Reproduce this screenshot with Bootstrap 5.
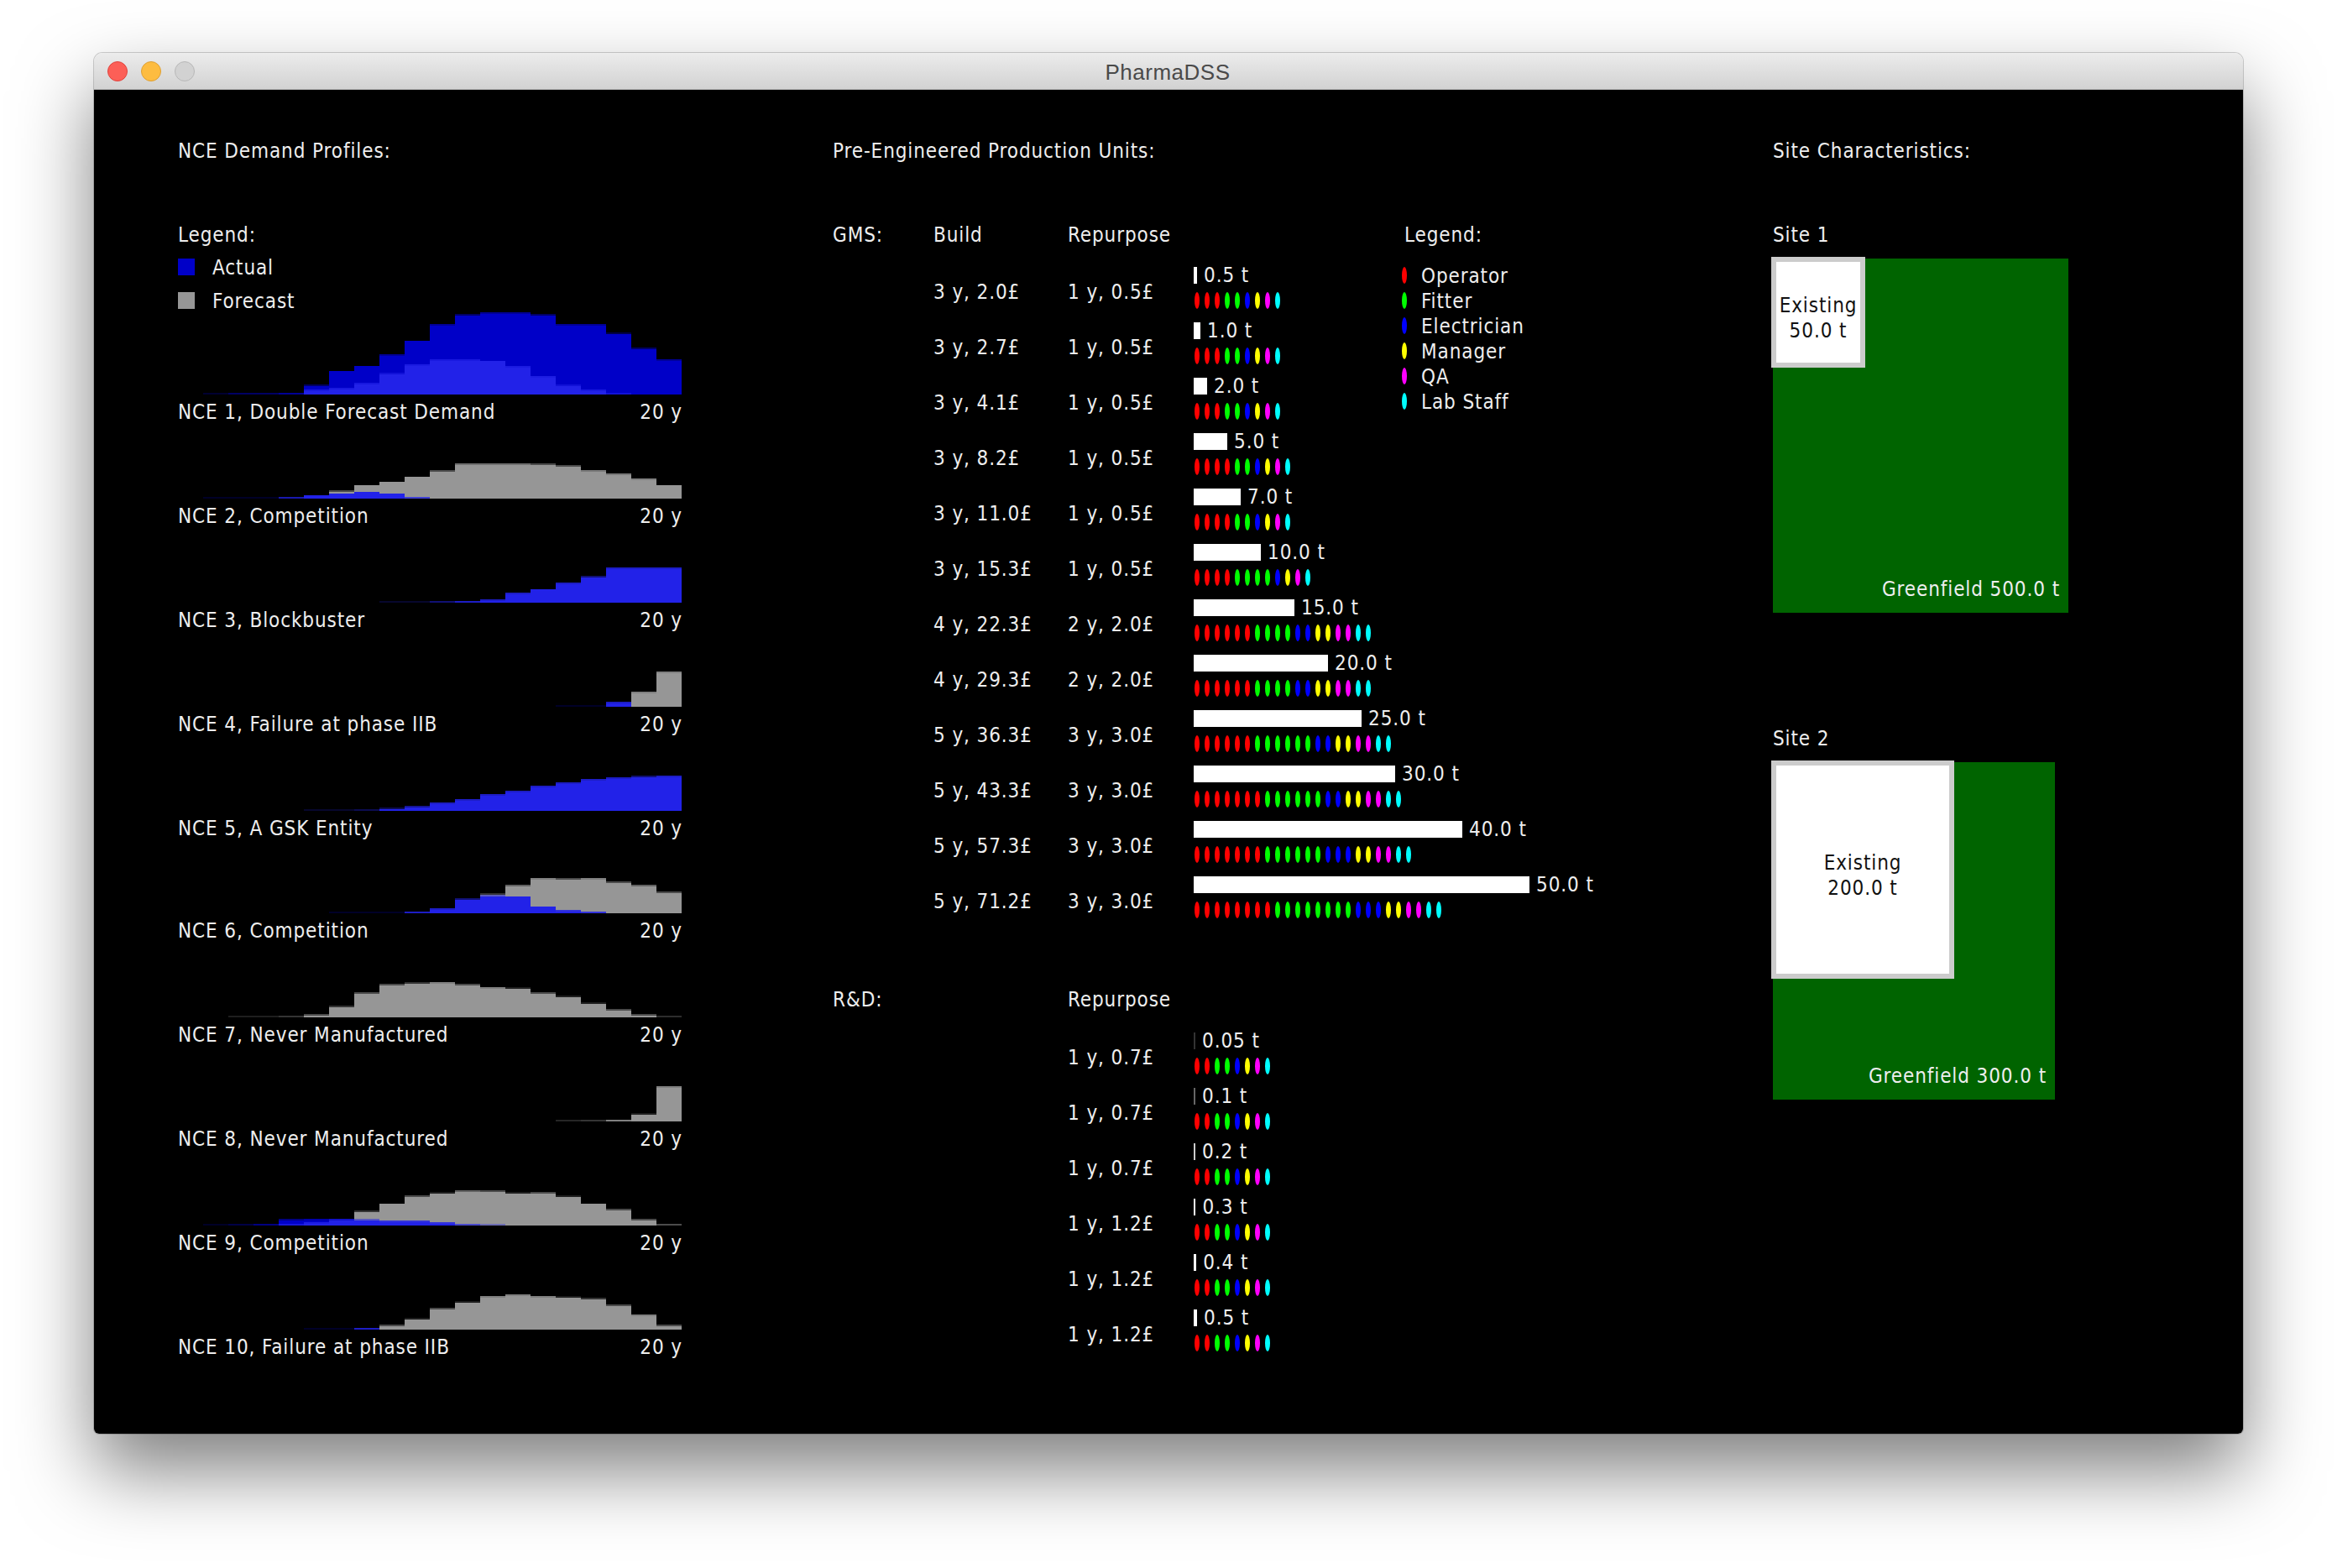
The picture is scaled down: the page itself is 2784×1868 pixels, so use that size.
<!doctype html>
<html lang="en">
<head>
<meta charset="utf-8">
<title>PharmaDSS</title>
<link rel="stylesheet" href="https://cdn.jsdelivr.net/npm/bootstrap@5.3.0/dist/css/bootstrap.min.css">
<style>
html,body{height:1868px;overflow:hidden;background:#fff}
body{padding-top:63px}
.dss-window{margin:0 112px;height:1645px;border-radius:10px 10px 6px 6px;box-shadow:0 44px 90px rgba(0,0,0,.5),0 0 0 1px rgba(0,0,0,.18)}
.dss-bar{height:44px;border-radius:10px 10px 0 0;background:linear-gradient(#ececec,#d2d2d2);border-bottom:1px solid #b4b4b4;padding-left:16px;gap:16px}
.dss-light{width:24px;height:24px;border-radius:50%;border:1px solid}
.dss-red{background:#fc5f57;border-color:#e0443e}
.dss-amber{background:#fdbc40;border-color:#dea034}
.dss-grey{background:#d2d2d2;border-color:#b8b8b8}
.dss-title{left:0;right:2px;top:0;font:26px/46px "Liberation Sans",sans-serif;letter-spacing:.5px;color:#4a4a4a;text-align:center}
.dss-body{height:1601px;background:#000;color:#eee;padding:58px 0 0 100px;border-radius:0 0 6px 6px;font-family:"DejaVu Sans Condensed","DejaVu Sans",sans-serif;font-size:24px;line-height:30px;font-stretch:condensed;letter-spacing:.9px}
.dss-left{width:600px;margin-right:180px}
.dss-mid{width:1120px}
.dss-head{margin-bottom:70px}
.dss-key{margin-top:13px;margin-bottom:2px;gap:20px}
.dss-keyrow{height:20px;line-height:22px;gap:21px}
.dss-sq{width:20px;height:20px}
.dss-actual{background:#0000c8}
.dss-fore{background:#969696}
.dss-chart{display:block;width:600px}
.dss-item{margin-bottom:44px}
.dss-label{margin-top:6px}
.dss-label span:last-child{margin-right:-1px}
.dss-units{width:681px}
.dss-c1{width:120px;flex:none}
.dss-c2{width:160px;flex:none}
.dss-c3{width:150px;flex:none}
.dss-gap{margin-bottom:23px}
.dss-row{height:66px;white-space:nowrap}
.dss-val{padding-top:15px}
.dss-barline{height:20px;line-height:20px;gap:8px}
.dss-fill{height:20px;background:#fff;flex:none}
.dss-dots{margin-top:10px;gap:6px;padding-left:1px}
.dss-dot{width:6px;height:20px;border-radius:50%;flex:none}
.dss-rd{margin-top:66px;margin-bottom:24px}
.dss-lg{margin-top:23px;gap:10px;margin-left:-3px}
.dss-lgrow{height:20px;line-height:22px;gap:17px}
.dss-field{background:#006400;padding:0 10px 13px 0}
.dss-f1{width:352px;height:422px;margin-top:13px}
.dss-f2{width:336px;height:402px;margin-top:13px}
.dss-exist{top:-2px;left:-2px;background:#fff;color:#111;border:6px solid #ccc;padding-top:14px}
.dss-e1{width:112px;height:132px}
.dss-e2{width:218px;height:260px}
.dss-site2{margin-top:135px}
</style>
</head>
<body>
<div class="dss-window">
  <div class="dss-bar d-flex align-items-center position-relative">
    <span class="dss-light dss-red"></span><span class="dss-light dss-amber"></span><span class="dss-light dss-grey"></span>
    <div class="dss-title position-absolute">PharmaDSS</div>
  </div>
  <div class="dss-body d-flex">
    <div class="dss-left">
      <div class="dss-head">NCE Demand Profiles:</div>
      <div>Legend:</div>
      <div class="dss-key d-flex flex-column">
        <div class="dss-keyrow d-flex"><span class="dss-sq dss-actual"></span>Actual</div>
        <div class="dss-keyrow d-flex"><span class="dss-sq dss-fore"></span>Forecast</div>
      </div>
      <div id="charts"></div>
    </div>
    <div class="dss-mid">
      <div class="dss-head">Pre-Engineered Production Units:</div>
      <div class="d-flex">
        <div class="dss-units">
          <div class="d-flex dss-gap"><div class="dss-c1">GMS:</div><div class="dss-c2">Build</div><div class="dss-c3">Repurpose</div></div>
          <div id="gms"></div>
          <div class="d-flex dss-rd"><div class="dss-c1">R&amp;D:</div><div class="dss-c2"></div><div class="dss-c3">Repurpose</div></div>
          <div id="rnd"></div>
        </div>
        <div>
          <div>Legend:</div>
          <div class="dss-lg d-flex flex-column" id="staff"></div>
        </div>
      </div>
    </div>
    <div>
      <div class="dss-head">Site Characteristics:</div>
      <div>Site 1</div>
      <div class="dss-field dss-f1 position-relative d-flex justify-content-end align-items-end">
        <div class="dss-exist dss-e1 position-absolute d-flex flex-column justify-content-center align-items-center"><div>Existing</div><div>50.0 t</div></div>
        <div>Greenfield 500.0 t</div>
      </div>
      <div class="dss-site2">Site 2</div>
      <div class="dss-field dss-f2 position-relative d-flex justify-content-end align-items-end">
        <div class="dss-exist dss-e2 position-absolute d-flex flex-column justify-content-center align-items-center"><div>Existing</div><div>200.0 t</div></div>
        <div>Greenfield 300.0 t</div>
      </div>
    </div>
  </div>
</div>
<script src="https://cdn.jsdelivr.net/npm/bootstrap@5.3.0/dist/js/bootstrap.bundle.min.js"></script>
<script>
const Z=n=>Array(n).fill(0);
const same=a=>[a,a];
const charts=[
 ["NCE 1, Double Forecast Demand",100,[0,.5,1,1,1.5,11,28,34,47.5,64,83.5,95,97.5,97.5,95,83.5,83.5,72.7,55,41.5],[0,0,0,0,0,5.5,7.5,13.4,25,35.6,41.5,41.5,40,33.6,21.7,11,5.5,1,0,0]],
 ["NCE 2, Competition",44,[0,.2,.2,.3,1.5,4,6,8,6,1.5,...Z(10)],[0,0,0,0,1.5,4,9,16,20,26,33,41.5,41.5,41.5,41,39,33.6,29.6,23.7,16]],
 ["NCE 3, Blockbuster",44,...same([...Z(8),.2,.3,1,1.7,3.7,11.7,16,23.7,31,41.7,41.7,41.7])],
 ["NCE 4, Failure at phase IIB",44,[...Z(15),.2,.3,5.7,0,0],[...Z(17),5.7,17.7,41.7]],
 ["NCE 5, A GSK Entity",44,...same([...Z(5),.2,.2,.7,2.7,5.3,9.7,13.7,19.7,23.7,29.7,33.7,37.7,39.7,41,41.7])],
 ["NCE 6, Competition",42,[...Z(6),.2,.2,.3,1.7,5.7,17,21,20,8,3.7,1.7,0,0,0],[...Z(9),1.7,5.7,17,22.7,33.3,41.7,41,41.7,37,33.3,25]],
 ["NCE 7, Never Manufactured",44,Z(20),[0,0,.2,.2,.7,3,12.7,29,39,40.7,41.7,39,35.7,34.3,29,24.3,16.3,9,3,.6]],
 ["NCE 8, Never Manufactured",44,Z(20),[...Z(15),.5,.7,1.7,8.3,41.7]],
 ["NCE 9, Competition",44,[0,.3,.7,1.3,7.3,7.7,7.7,7,5.7,5.7,3.7,1.3,.7,...Z(7)],[0,0,0,0,1.3,3.7,7,16.7,26,35,38.3,41.3,41,38.3,39,34.3,26,19,7,1]],
 ["NCE 10, Failure at phase IIB",44,[...Z(5),.2,.2,1.7,...Z(12)],[...Z(7),1.7,5,12.3,25,32.3,39.7,41.7,39.7,38.3,36.7,29,17.7,5]]
];
function seg(i,h,H,col){
  if(h<=0)return "";
  const s=Math.floor(h/2)*2,fr=(h-s)/2,x=i*30;let o="";
  if(s>0)o+=`<rect x="${x}" y="${H-s}" width="30" height="${s}" fill="${col}"/>`;
  if(fr>0)o+=`<rect x="${x}" y="${H-s-2}" width="30" height="2" fill="${col}" opacity="${Math.max(fr,.2).toFixed(2)}"/>`;
  return o;
}
document.getElementById("charts").innerHTML=charts.map(([n,H,a,f])=>{
  let r="";
  for(let i=0;i<20;i++){
    const hi=Math.max(a[i],f[i]),lo=Math.min(a[i],f[i]);
    if(hi>lo)r+=seg(i,hi,H,a[i]>f[i]?"#0000c8":"#969696");
    r+=seg(i,lo,H,"#2222e8");
  }
  return `<div class="dss-item"><svg class="dss-chart" height="${H}" viewBox="0 0 600 ${H}" shape-rendering="crispEdges">${r}</svg><div class="dss-label d-flex justify-content-between"><span>${n}</span><span>20 y</span></div></div>`;
}).join("");
const cols=["#f00","#0f0","#00f","#ff0","#f0f","#0ff"];
function dots(c){let o="";c.forEach((n,k)=>{for(let j=0;j<n;j++)o+=`<span class="dss-dot" style="background:${cols[k]}"></span>`});return o}
function unit(b,r,t,c){
  const w=t*8,fill=w<2?`width:2px;opacity:${(w/2).toFixed(2)}`:`width:${w}px`;
  return `<div class="dss-row d-flex"><div class="dss-c1"></div><div class="dss-c2 dss-val">${b}</div><div class="dss-c3 dss-val">${r}</div><div><div class="dss-barline d-flex"><span class="dss-fill" style="${fill}"></span><span>${t==.05?"0.05":t.toFixed(1)} t</span></div><div class="dss-dots d-flex">${dots(c)}</div></div></div>`;
}
document.getElementById("gms").innerHTML=[
 ["3 y, 2.0£","1 y, 0.5£",.5,[3,2,1,1,1,1]],["3 y, 2.7£","1 y, 0.5£",1,[3,2,1,1,1,1]],["3 y, 4.1£","1 y, 0.5£",2,[3,2,1,1,1,1]],
 ["3 y, 8.2£","1 y, 0.5£",5,[4,2,1,1,1,1]],["3 y, 11.0£","1 y, 0.5£",7,[4,2,1,1,1,1]],["3 y, 15.3£","1 y, 0.5£",10,[4,4,1,1,1,1]],
 ["4 y, 22.3£","2 y, 2.0£",15,[6,4,2,2,2,2]],["4 y, 29.3£","2 y, 2.0£",20,[6,4,2,2,2,2]],["5 y, 36.3£","3 y, 3.0£",25,[6,6,2,2,2,2]],
 ["5 y, 43.3£","3 y, 3.0£",30,[7,6,2,2,2,2]],["5 y, 57.3£","3 y, 3.0£",40,[7,6,3,2,2,2]],["5 y, 71.2£","3 y, 3.0£",50,[8,8,3,2,2,2]]
].map(u=>unit(...u)).join("");
document.getElementById("rnd").innerHTML=[["1 y, 0.7£",.05],["1 y, 0.7£",.1],["1 y, 0.7£",.2],["1 y, 1.2£",.3],["1 y, 1.2£",.4],["1 y, 1.2£",.5]]
 .map(([r,t])=>unit("",r,t,[2,2,1,1,1,1])).join("");
document.getElementById("staff").innerHTML=["Operator","Fitter","Electrician","Manager","QA","Lab Staff"]
 .map((n,i)=>`<div class="dss-lgrow d-flex"><span class="dss-dot" style="background:${cols[i]}"></span><span>${n}</span></div>`).join("");
</script>
</body>
</html>
